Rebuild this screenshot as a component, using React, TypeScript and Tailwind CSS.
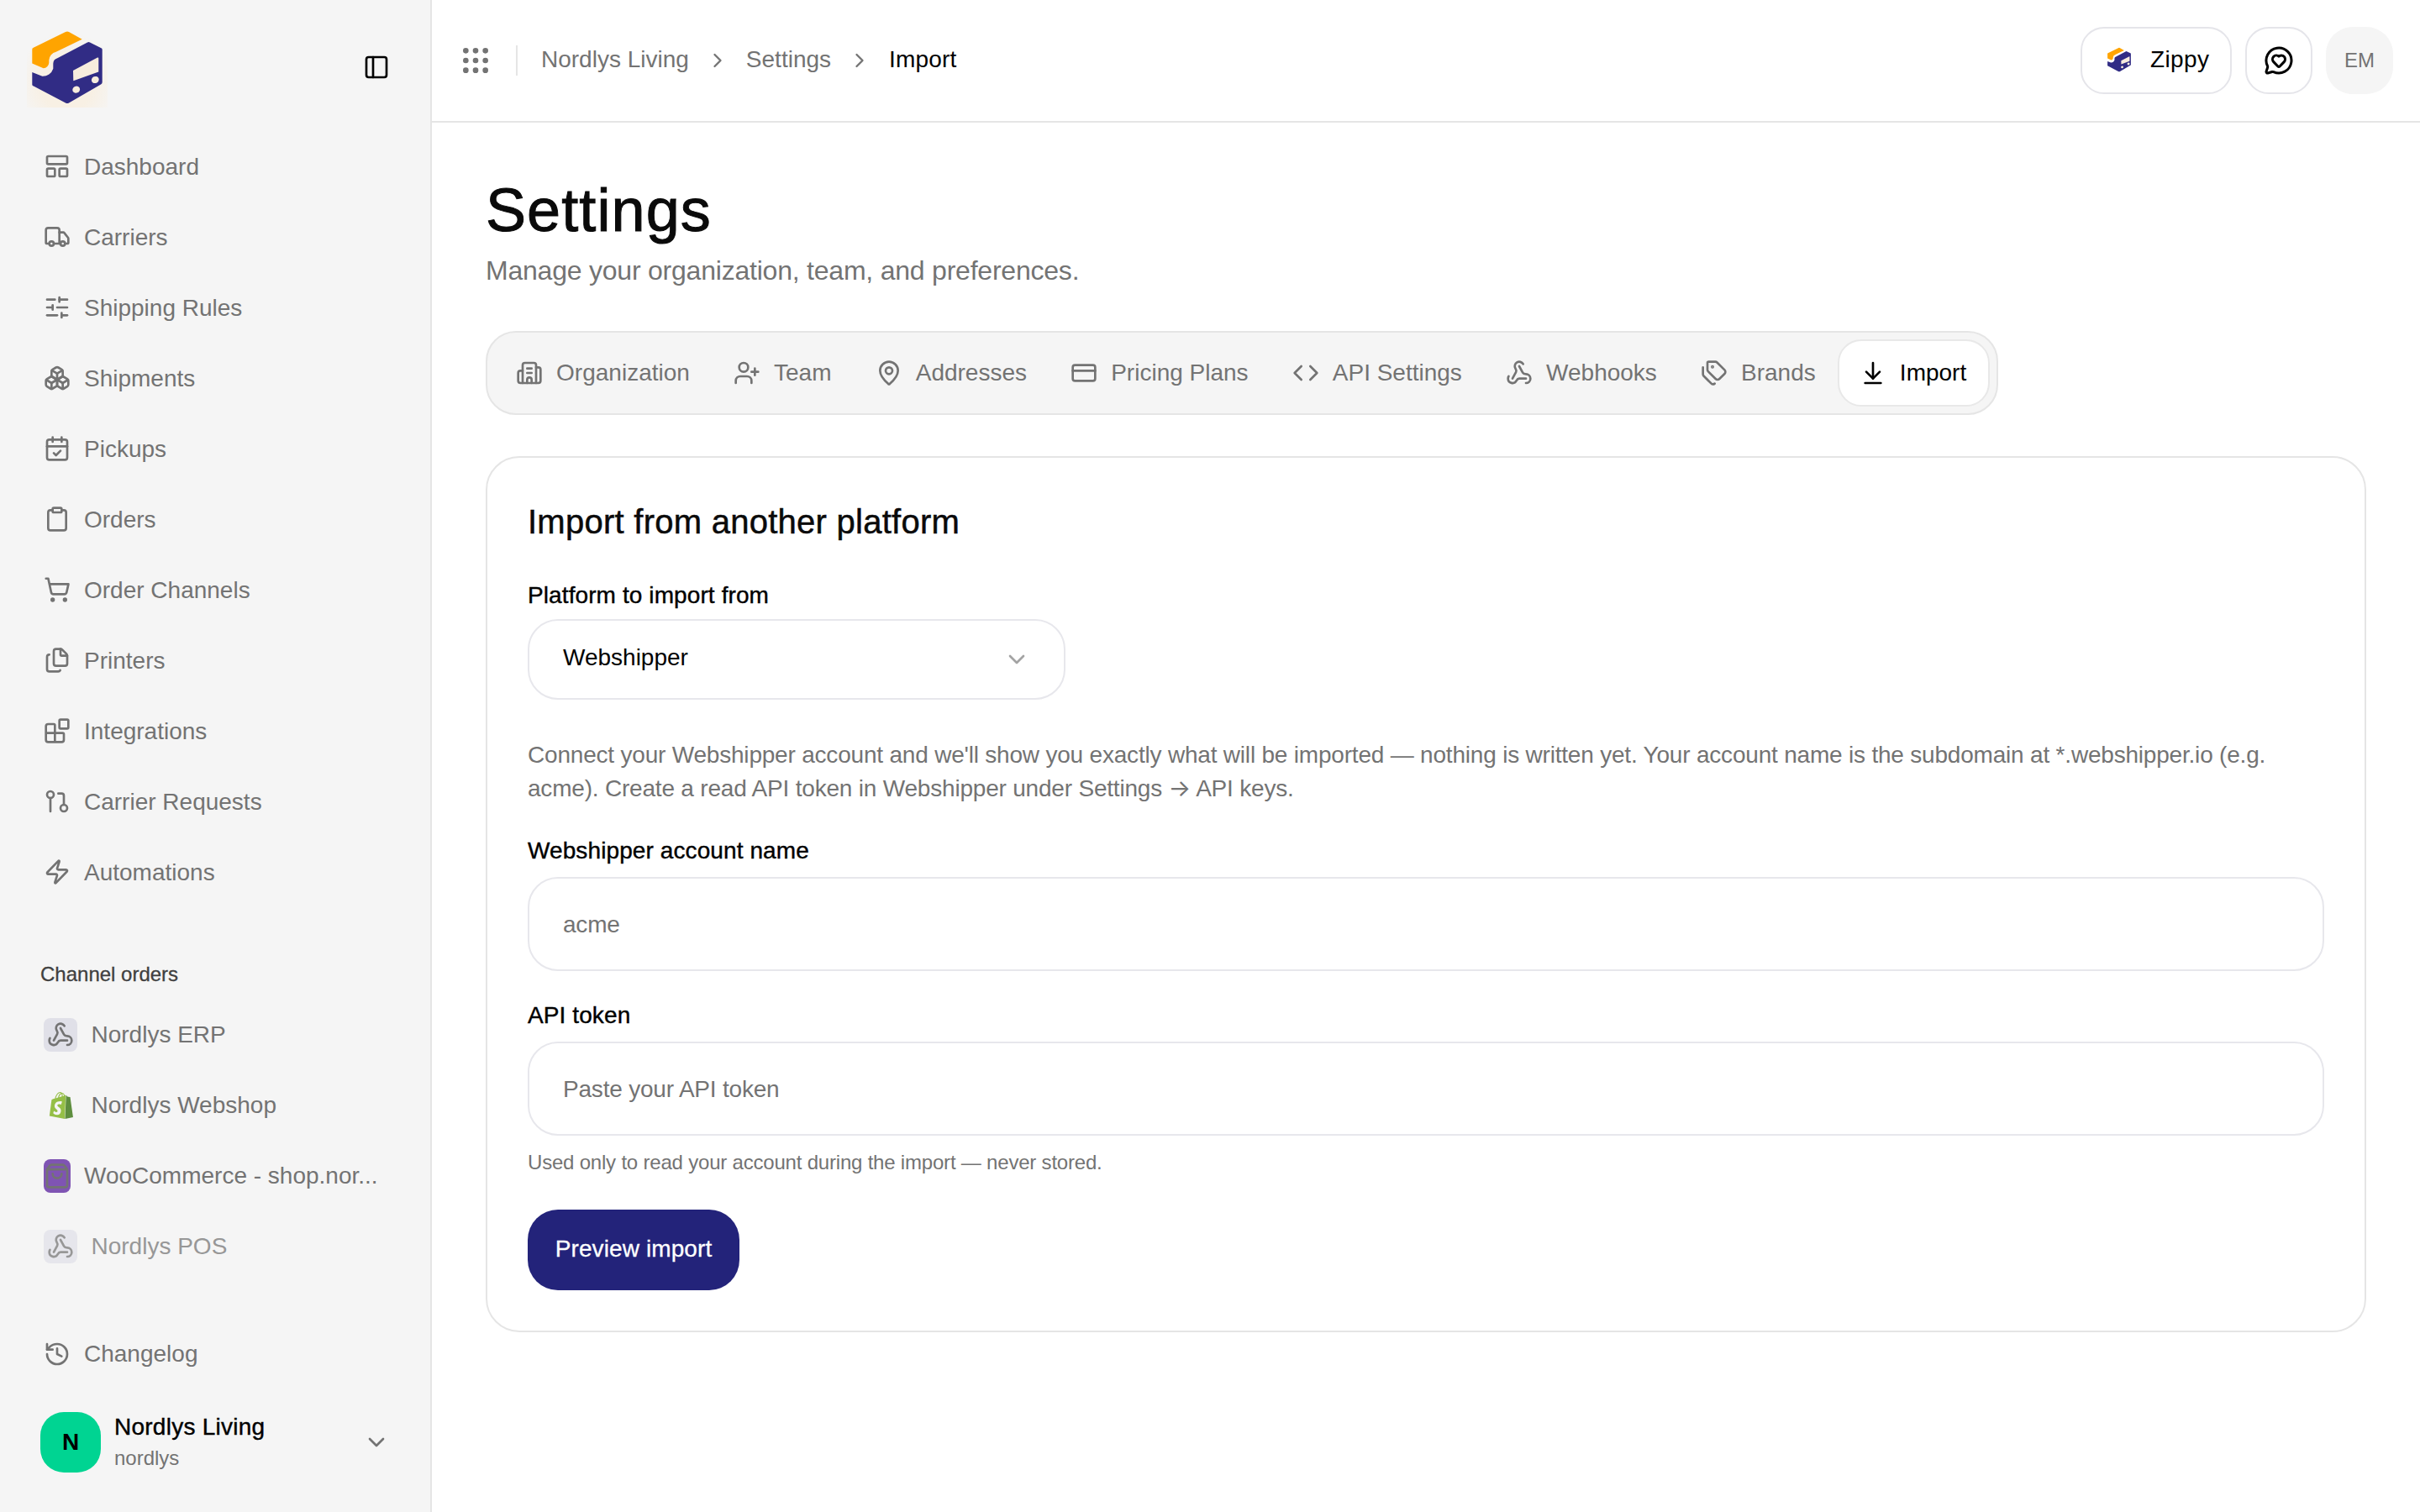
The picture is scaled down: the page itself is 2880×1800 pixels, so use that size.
import {
  ArrowDownToLine,
  Blocks,
  Boxes,
  Building2,
  CalendarCheck,
  ChevronDown,
  ChevronRight,
  Clipboard,
  Code,
  CreditCard,
  Files,
  Grip,
  History,
  LayoutPanelTop,
  MapPin,
  MessageCircleHeart,
  PanelLeft,
  ShoppingBag,
  ShoppingCart,
  SlidersHorizontal,
  Tags,
  Truck,
  UserPlus,
  Webhook,
  Zap,
} from "lucide-react"

const LogoMark = ({ className, glow }: { className: string; glow?: boolean }) => (
  <svg viewBox="32 32 96 96" className={className}>
    {glow && (
      <>
        <defs>
          <radialGradient id="logo-glow" gradientUnits="userSpaceOnUse" cx="80" cy="100" r="62">
            <stop offset="0.5" stopColor="#f8f0e4" />
            <stop offset="1" stopColor="#f5f5f5" />
          </radialGradient>
        </defs>
        <rect x="32" y="32" width="96" height="96" fill="url(#logo-glow)" />
      </>
    )}
    <path
      d="M78 38a5 5 0 0 1 4 0l15.700 8.700-31 15a11 11 0 0 0-8.400 10v3a7 7 0 0 1-6.600 6.500l-13.400-5.700v-16.800a2 2 0 0 1 1.500-2z"
      fill="#ffa400"
    />
    <path
      d="M104 50.500a3 3 0 0 1 3 0l13 6.500a2 2 0 0 1 1.700 2v39a3 3 0 0 1-1.700 2.500l-38 22a4 4 0 0 1-4 0l-38-20a2 2 0 0 1-1.700-1.800v-14.700l12 4.700a13 13 0 0 0 13-9v-6a7 7 0 0 1 5-6.500z"
      fill="#312c85"
    />
    <path d="M87 84l29-15.500a1 1 0 0 1 1.300 1v16l-30 10.700z" fill="#f7ecdd" />
    <ellipse cx="90.700" cy="106.700" rx="4.500" ry="4" fill="#f7ecdd" transform="rotate(-25 90.700 106.700)" />
    <ellipse cx="113.300" cy="95" rx="4.500" ry="4" fill="#f7ecdd" transform="rotate(-25 113.300 95)" />
  </svg>
)

const CarrierRequests = ({ className }: { className: string }) => (
  <svg viewBox="0 0 24 24" fill="none" stroke="currentColor" strokeWidth="2" strokeLinecap="round" strokeLinejoin="round" className={className}>
    <circle cx="6" cy="6" r="3" />
    <path d="M6 9v12" />
    <circle cx="18" cy="18" r="3" />
    <path d="M13 5h3a2 2 0 0 1 2 2v8" />
  </svg>
)

const ShopifyMark = () => (
  <svg viewBox="0 0 24 24" className="h-[34px] w-[32px]">
    <path
      d="M11.710 11.305s-.81-.424-1.774-.424c-1.447 0-1.504.906-1.504 1.141 0 1.232 3.240 1.715 3.240 4.629 0 2.295-1.440 3.760-3.406 3.760-2.354 0-3.540-1.465-3.540-1.465l.646-2.086s1.245 1.066 2.280 1.066c.675 0 .975-.545.975-.932 0-1.619-2.654-1.694-2.654-4.359-.034-2.237 1.571-4.416 4.827-4.416 1.257 0 1.875.361 1.875.361l-.945 2.715-.02.01zM11.170.83c.136 0 .271.038.405.135-.984.465-2.064 1.639-2.508 3.992-.656.213-1.293.405-1.889.578C7.697 3.750 8.951.84 11.170.84V.83zm1.235 2.949v.135c-.754.232-1.583.484-2.394.736.466-1.777 1.333-2.645 2.085-2.971.193.501.309 1.176.309 2.100zm.539-2.234c.694.074 1.141.867 1.429 1.755-.349.114-.735.231-1.158.366v-.252c0-.752-.096-1.371-.271-1.871v.002zm2.992 1.289c-.02 0-.06.021-.078.021s-.289.075-.714.210c-.423-1.233-1.176-2.370-2.508-2.370h-.115C12.135.209 11.669 0 11.265 0 8.159 0 6.675 3.877 6.210 5.846c-1.194.365-2.063.636-2.160.674-.675.213-.694.232-.772.870-.075.462-1.830 14.063-1.830 14.063L15.009 24l.927-21.166z"
      fill="#95bf47"
    />
    <path
      d="M15.337 23.979l7.216-1.561s-2.604-17.613-2.625-17.730c-.018-.116-.114-.192-.211-.192s-1.929-.136-1.929-.136-1.275-1.274-1.439-1.411c-.045-.037-.075-.057-.121-.074l-.914 21.104h.023z"
      fill="#5e8e3e"
    />
  </svg>
)

const mainNav = [
  { label: "Dashboard", icon: LayoutPanelTop },
  { label: "Carriers", icon: Truck },
  { label: "Shipping Rules", icon: SlidersHorizontal },
  { label: "Shipments", icon: Boxes },
  { label: "Pickups", icon: CalendarCheck },
  { label: "Orders", icon: Clipboard },
  { label: "Order Channels", icon: ShoppingCart },
  { label: "Printers", icon: Files },
  { label: "Integrations", icon: Blocks },
  { label: "Carrier Requests", icon: CarrierRequests },
  { label: "Automations", icon: Zap },
]

const tabs = [
  { label: "Organization", icon: Building2 },
  { label: "Team", icon: UserPlus },
  { label: "Addresses", icon: MapPin },
  { label: "Pricing Plans", icon: CreditCard },
  { label: "API Settings", icon: Code },
  { label: "Webhooks", icon: Webhook },
  { label: "Brands", icon: Tags },
]

const WebhookTile = ({ faded }: { faded?: boolean }) => (
  <span className={`flex h-10 w-10 shrink-0 items-center justify-center rounded-lg ${faded ? "bg-[#e6e6ec] text-[#979797]" : "bg-[#e0e0e8] text-[#737373]"}`}>
    <Webhook className="h-8 w-8" />
  </span>
)

const inputClass =
  "mt-[11px] block h-[112px] w-full rounded-[36px] border-2 border-[#e7e7ec] bg-white px-10 pt-[2px] text-[28px] tracking-[-0.2px] text-black outline-none placeholder:text-[#737373]"

const labelClass = "block h-10 text-[28px] leading-10 tracking-[0.1px] text-black [-webkit-text-stroke:0.4px_currentColor]"

export default function App() {
  return (
    <div className="flex h-screen bg-white font-['Liberation_Sans',Arial,sans-serif] text-black">
      <aside className="flex w-[514px] shrink-0 flex-col border-r-2 border-[#e5e5e5] bg-[#f5f5f5] pb-[46px] text-[#737373]">
        <div className="flex items-center justify-between pt-8 pb-7 pl-8 pr-12">
          <LogoMark className="h-24 w-24" glow />
          <PanelLeft className="h-8 w-8 text-black" />
        </div>

        <nav>
          {mainNav.map(({ label, icon: Icon }) => (
            <div key={label} className="flex h-[84px] items-center gap-4 pl-[52px] text-[28px]">
              <Icon className="h-8 w-8 shrink-0" />
              <span className="pt-[2px]">{label}</span>
            </div>
          ))}
        </nav>

        <div className="mt-[60px] h-10 pl-12 text-[24px] leading-10 text-[#404040] [-webkit-text-stroke:0.3px_currentColor]">Channel orders</div>

        <div className="mt-[10px] text-[28px]">
          <div className="flex h-[84px] items-center gap-[16.5px] pl-[52px]">
            <WebhookTile />
            <span>Nordlys ERP</span>
          </div>
          <div className="flex h-[84px] items-center pl-[57px]">
            <ShopifyMark />
            <span className="ml-[19.5px]">Nordlys Webshop</span>
          </div>
          <div className="flex h-[84px] items-center gap-4 pl-[52px]">
            <span className="flex h-10 w-8 shrink-0 items-center justify-center rounded-lg bg-[#7f54b3]">
              <ShoppingBag className="h-8 w-8" />
            </span>
            <span className="whitespace-nowrap">WooCommerce - shop.nor...</span>
          </div>
          <div className="flex h-[84px] items-center gap-[16.5px] pl-[52px] text-[#979797]">
            <WebhookTile faded />
            <span>Nordlys POS</span>
          </div>
        </div>

        <div className="mt-auto flex h-[84px] items-center gap-4 pl-[52px] text-[28px]">
          <History className="h-8 w-8" />
          <span>Changelog</span>
        </div>

        <div className="mt-[26px] flex items-center pl-12 pr-12">
          <span className="flex h-[72px] w-[72px] items-center justify-center rounded-[28px] bg-[#00d492] text-[28px] font-bold text-black">N</span>
          <div className="ml-4 flex-1 pt-[1px]">
            <div className="text-[28px] leading-9 tracking-[0.25px] text-black [-webkit-text-stroke:0.4px_currentColor]">Nordlys Living</div>
            <div className="pt-[1px] text-[24px] leading-9">nordlys</div>
          </div>
          <ChevronDown className="h-8 w-8" />
        </div>
      </aside>

      <main className="min-w-0 flex-1">
        <header className="flex h-[146px] items-center border-b-2 border-[#e5e5e5] pl-8 pr-8">
          <Grip className="h-10 w-10 text-[#737373]" />
          <span className="ml-7 h-9 w-0.5 bg-[#e5e5e5]" />
          <div className="ml-7 flex items-center gap-5 text-[28px] text-[#737373]">
            <span className="pb-[2px]">Nordlys Living</span>
            <ChevronRight className="h-7 w-7" />
            <span className="pb-[2px]">Settings</span>
            <ChevronRight className="h-7 w-7" />
            <span className="pb-[2px] pl-[1px] tracking-[0.2px] text-black">Import</span>
          </div>
          <div className="ml-auto flex items-center gap-4">
            <button className="flex h-20 w-[180px] items-center gap-[21px] rounded-[28px] border-2 border-[#e5e5ea] pb-[2px] pl-[28px] text-[28px] tracking-[0.4px]">
              <LogoMark className="h-8 w-8" />
              Zippy
            </button>
            <button className="flex h-20 w-20 items-center justify-center rounded-[28px] border-2 border-[#e5e5ea]">
              <MessageCircleHeart className="h-9 w-9" />
            </button>
            <span className="flex h-20 w-20 items-center justify-center rounded-[32px] bg-[#f5f5f5] text-[24px] text-[#737373]">EM</span>
          </div>
        </header>

        <div className="px-16 pt-16">
          <h1 className="text-[72px] leading-[80px] tracking-[1.1px] text-[#0a0a0a] [-webkit-text-stroke:1px_currentColor]">Settings</h1>
          <p className="mt-2 text-[32px] leading-[48px] tracking-[-0.22px] text-[#737373]">Manage your organization, team, and preferences.</p>

          <div className="mt-12 flex h-[100px] w-fit items-center rounded-[36px] border-2 border-[#e5e5e5] bg-[#f5f5f5] p-2 text-[28px] text-[#737373]">
            {tabs.map(({ label, icon: Icon }) => (
              <div key={label} className="flex h-20 items-center gap-4 px-[26.1px]">
                <Icon className="h-8 w-8 shrink-0" />
                <span>{label}</span>
              </div>
            ))}
            <div className="flex h-20 items-center gap-4 rounded-[28px] border-2 border-[#e8e8e8] bg-white pl-6 pr-[26px] text-black">
              <ArrowDownToLine className="h-8 w-8" />
              <span>Import</span>
            </div>
          </div>

          <section className="mt-[49px] rounded-[40px] border-2 border-[#e5e5e5] p-12">
            <h2 className="text-[40px] leading-[56px] tracking-[0.26px] text-[#0a0a0a] [-webkit-text-stroke:0.5px_currentColor]">Import from another platform</h2>

            <label className={`mt-10 ${labelClass}`}>Platform to import from</label>
            <button className="mt-2 flex h-24 w-[640px] items-center justify-between rounded-[36px] border-2 border-[#e7e7ec] pl-10 pr-10 text-[28px]">
              <span className="pb-[4px]">Webshipper</span>
              <ChevronDown className="h-8 w-8 text-[#a3a3a3]" />
            </button>

            <p className="mt-[46px] text-[28px] leading-10 tracking-[-0.2px] text-[#737373]">
              Connect your Webshipper account and we'll show you exactly what will be imported — nothing is written yet. Your account name is the subdomain at *.webshipper.io (e.g. acme). Create a read API token in Webshipper under Settings <span className="font-['Inter'] leading-none">→</span> API keys.
            </p>

            <label className={`mt-[34px] ${labelClass}`}>Webshipper account name</label>
            <input className={inputClass} placeholder="acme" />

            <label className={`mt-[33px] ${labelClass}`}>API token</label>
            <input className={inputClass} placeholder="Paste your API token" />

            <p className="mt-4 text-[24px] leading-8 tracking-[-0.2px] text-[#737373]">Used only to read your account during the import — never stored.</p>

            <button className="mt-10 flex h-24 w-[252px] items-center justify-center rounded-[36px] bg-[#23237a] pb-[2px] text-[28px] tracking-[0.1px] text-white [-webkit-text-stroke:0.3px_currentColor]">
              Preview import
            </button>
          </section>
        </div>
      </main>
    </div>
  )
}
